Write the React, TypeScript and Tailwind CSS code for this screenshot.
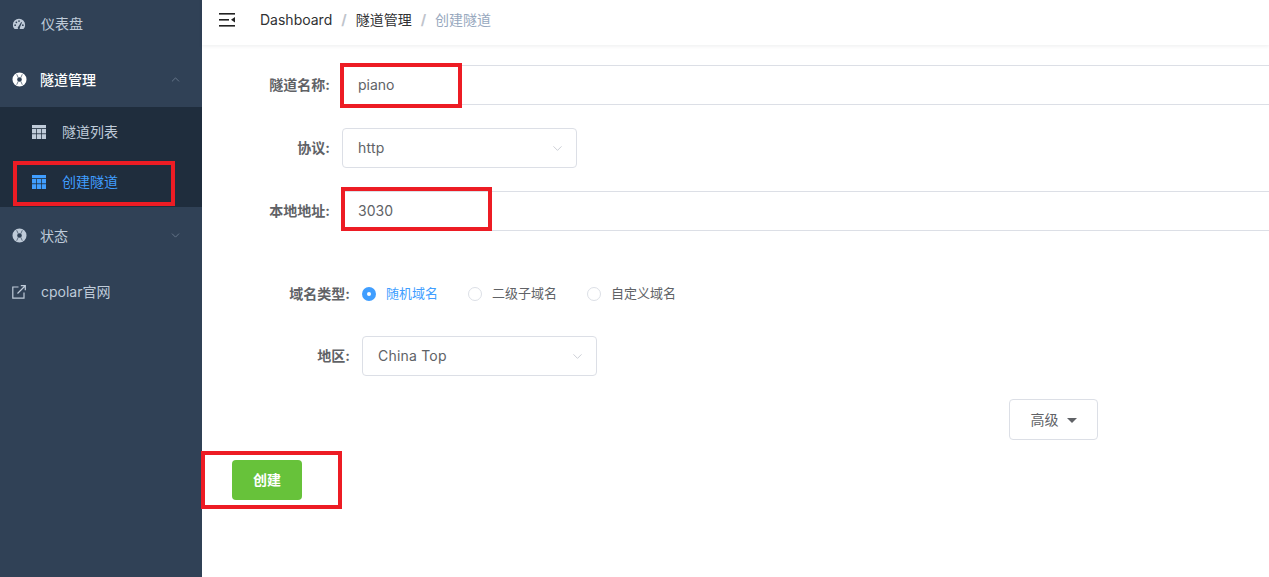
import { ChevronDown, ChevronUp } from "lucide-react";

const CJK = "font-['Inter','Noto_Sans_CJK_SC',sans-serif]";

const GaugeIcon = () => (
  <svg viewBox="0 0 16 14" className="h-[14px] w-[14px] fill-[#bfcbd9]">
    <path d="M8 1a7 7 0 0 0-7 7c0 1.6.5 3 1.4 4.2.2.3.5.4.8.4h9.6c.3 0 .6-.1.8-.4A7 7 0 0 0 15 8a7 7 0 0 0-7-7Z" />
    <g className="fill-[#304156]">
      <circle cx="3.6" cy="8.4" r="1" />
      <circle cx="5" cy="5" r="1" />
      <circle cx="8" cy="3.6" r="1" />
      <circle cx="12.4" cy="8.4" r="1" />
      <path d="M7 10.5 10.6 4.8l.8.4L9 11a1.3 1.3 0 1 1-2-.5Z" />
    </g>
  </svg>
);

const LifeRing = ({ light }: { light?: boolean }) => (
  <svg viewBox="0 0 16 16" className={light ? "h-[15px] w-[15px] text-white" : "h-[15px] w-[15px] text-[#bfcbd9]"}>
    <circle cx="8" cy="8" r="5" fill="none" stroke="currentColor" strokeWidth="5" />
    <path d="M5 2.4 6.6 6M11 2.4 9.4 6M5 13.6 6.6 10M11 13.6 9.4 10" stroke="#304156" strokeWidth="0.7" />
  </svg>
);

const TableIcon = ({ active }: { active?: boolean }) => (
  <svg viewBox="0 0 14 14" className={active ? "h-[14px] w-[14px] fill-[#409eff]" : "h-[14px] w-[14px] fill-[#bfcbd9]"}>
    <rect x="0" y="0" width="14" height="3.2" />
    <rect x="0" y="4" width="4.2" height="4.4" />
    <rect x="4.9" y="4" width="4.2" height="4.4" />
    <rect x="9.8" y="4" width="4.2" height="4.4" />
    <rect x="0" y="9.2" width="4.2" height="4.8" />
    <rect x="4.9" y="9.2" width="4.2" height="4.8" />
    <rect x="9.8" y="9.2" width="4.2" height="4.8" />
  </svg>
);

const LinkIcon = () => (
  <svg viewBox="0 0 14 14" className="h-[14px] w-[14px] fill-none stroke-[#bfcbd9]" strokeWidth="1.2">
    <path d="M6.5 2H.8v11.2H12V7.5" />
    <path d="M5.5 8.5 13 1M8.8.7h4.5v4.5" />
  </svg>
);

const FoldIcon = () => (
  <svg viewBox="0 0 16 14" className="h-[14px] w-4 fill-[#222]">
    <rect x="0" y="0" width="16" height="1.6" />
    <rect x="0" y="6" width="10" height="1.6" />
    <rect x="0" y="12" width="16" height="1.6" />
    <path d="M16 4v5.6L12 6.8Z" />
  </svg>
);

const Select = ({ value, width }: { value: string; width: string }) => (
  <div className={`flex h-10 items-center justify-between rounded border border-[#dcdfe6] pr-[11px] pl-[15px] text-sm text-[#606266] ${width}`}>
    <span className="tracking-[0.2px]">{value}</span>
    <ChevronDown className="h-[15px] w-[15px] text-[#c0c4cc]" strokeWidth={1.3} />
  </div>
);

const Label = ({ text, width }: { text: string; width: string }) => (
  <label className={`shrink-0 pr-3 text-right text-sm font-bold text-[#606266] ${width}`}>{text}</label>
);

const Radio = ({ text, checked }: { text: string; checked?: boolean }) => (
  <div className={checked ? "flex items-center gap-[10px] text-[13px] text-[#409eff]" : "flex items-center gap-[10px] text-[13px] text-[#606266]"}>
    {checked ? (
      <span className="flex h-[14px] w-[14px] items-center justify-center rounded-full bg-[#409eff]">
        <span className="h-1 w-1 rounded-full bg-white" />
      </span>
    ) : (
      <span className="h-[14px] w-[14px] rounded-full border border-[#dcdfe6]" />
    )}
    {text}
  </div>
);

const RedBox = ({ className }: { className: string }) => (
  <div className={`absolute border-4 border-[#ed1c24] ${className}`} />
);

export default function App() {
  return (
    <div className={`relative flex h-[577px] w-[1269px] overflow-hidden bg-white ${CJK}`}>
      <aside className="w-[202px] shrink-0 bg-[#304156] text-sm text-[#bfcbd9]">
        <div className="-mt-1 flex h-14 items-center gap-[15px] pl-[12px]">
          <GaugeIcon />
          <span>仪表盘</span>
        </div>
        <div className="flex h-[55px] items-center pr-[20px] pl-[12px] text-white">
          <LifeRing light />
          <span className="ml-[13px] flex-1 font-medium">隧道管理</span>
          <ChevronUp className="h-[13px] w-[13px] text-[#6f7f92]" strokeWidth={1.5} />
        </div>
        <div className="bg-[#1f2d3d]">
          <div className="flex h-[50px] items-center gap-[16px] pl-[32px]">
            <TableIcon />
            <span>隧道列表</span>
          </div>
          <div className="flex h-[50px] items-center gap-[16px] pl-[32px] text-[#409eff]">
            <TableIcon active />
            <span>创建隧道</span>
          </div>
        </div>
        <div className="flex h-[57px] items-center pr-[20px] pl-[12px]">
          <LifeRing />
          <span className="ml-[13px] flex-1">状态</span>
          <ChevronDown className="h-[13px] w-[13px] text-[#6f7f92]" strokeWidth={1.5} />
        </div>
        <div className="flex h-14 items-center gap-[15px] pl-[12px]">
          <LinkIcon />
          <span>cpolar官网</span>
        </div>
      </aside>

      <main className="min-w-0 flex-1">
        <header className="flex h-[45px] items-center pb-[5px] pl-[17px] shadow-[0_1px_4px_rgba(0,21,41,0.08)]">
          <FoldIcon />
          <nav className="ml-[25px] flex items-center text-sm text-[#303133]">
            <span>Dashboard</span>
            <span className="mx-[9px] font-bold text-[#c0c4cc]">/</span>
            <span>隧道管理</span>
            <span className="mx-[9px] font-bold text-[#c0c4cc]">/</span>
            <span className="text-[#97a8be]">创建隧道</span>
          </nav>
        </header>

        <form className="pt-5">
          <div className="flex items-center">
            <Label text="隧道名称:" width="w-[140px]" />
            <div className="flex h-10 flex-1 items-center border-y border-[#dcdfe6] pl-4 text-sm text-[#606266]">piano</div>
          </div>
          <div className="mt-[23px] flex items-center">
            <Label text="协议:" width="w-[140px]" />
            <Select value="http" width="w-[235px]" />
          </div>
          <div className="mt-[23px] flex items-center">
            <Label text="本地地址:" width="w-[140px]" />
            <div className="flex h-10 flex-1 items-center border-y border-[#dcdfe6] pl-4 text-sm text-[#606266]">3030</div>
          </div>
          <div className="mt-[53px] flex h-5 items-center">
            <Label text="域名类型:" width="w-[160px]" />
            <div className="flex items-center gap-[30px]">
              <Radio text="随机域名" checked />
              <Radio text="二级子域名" />
              <Radio text="自定义域名" />
            </div>
          </div>
          <div className="mt-[32px] flex items-center">
            <Label text="地区:" width="w-[160px]" />
            <Select value="China Top" width="w-[235px]" />
          </div>
          <div className="mt-[23px] flex justify-end pr-[171px]">
            <button type="button" className="flex h-[41px] w-[89px] items-center justify-center gap-2 rounded border border-[#dcdfe6] text-sm text-[#606266]">
              高级
              <span className="mt-[2px] h-0 w-0 border-x-[5px] border-t-[5px] border-x-transparent border-t-[#606266]" />
            </button>
          </div>
          <div className="mt-5 pl-[30px]">
            <button type="button" className="h-10 w-[70px] rounded bg-[#67c23a] text-sm font-bold text-white">创建</button>
          </div>
        </form>
      </main>

      {/* annotations drawn over the screenshot */}
      <RedBox className="top-[161px] left-[13px] h-[45px] w-[162px]" />
      <RedBox className="top-[63px] left-[340px] h-[45px] w-[122px]" />
      <RedBox className="top-[187px] left-[341px] h-[44px] w-[151px]" />
      <RedBox className="top-[451px] left-[201px] h-[58px] w-[141px]" />
    </div>
  );
}
